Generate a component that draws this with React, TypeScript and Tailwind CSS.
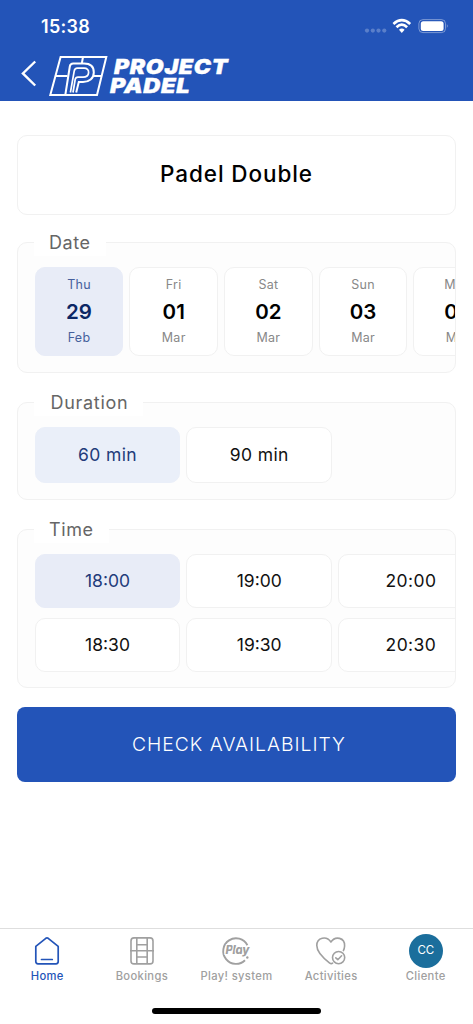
import React, { useState } from 'react';
import clsx from 'clsx';

const days = [
  { name: 'Thu', day: '29', month: 'Feb' },
  { name: 'Fri', day: '01', month: 'Mar' },
  { name: 'Sat', day: '02', month: 'Mar' },
  { name: 'Sun', day: '03', month: 'Mar' },
  { name: 'Mon', day: '04', month: 'Mar' },
];

const durations = ['60 min', '90 min'];

const times = ['18:00', '18:30', '19:00', '19:30', '20:00', '20:30'];

function StatusIcons() {
  return (
    <svg width="86" height="20" viewBox="0 0 86 20" fill="none">
      <g fill="#fff" fillOpacity="0.25">
        <circle cx="4" cy="14.6" r="2.1" />
        <circle cx="9.8" cy="14.6" r="2.1" />
        <circle cx="15.5" cy="14.6" r="2.1" />
        <circle cx="21.3" cy="14.6" r="2.1" />
      </g>
      <g stroke="#fff" strokeWidth="2.7">
        <path d="M30.4 7.9 Q38.8 0.5 47.2 7.9" />
        <path d="M33.5 11.2 Q38.8 6.2 44.1 11.2" />
      </g>
      <path d="M36 13.7 Q38.8 11.3 41.6 13.7 L38.8 16.9 Z" fill="#fff" />
      <rect x="55.9" y="3.6" width="26.6" height="13" rx="4" stroke="#fff" strokeOpacity="0.4" />
      <rect x="57.8" y="5.3" width="22.8" height="9.6" rx="2.5" fill="#fff" />
      <path d="M83.9 8 Q85.6 10 83.9 12 Z" fill="#fff" fillOpacity="0.5" />
    </svg>
  );
}

function Logo() {
  return (
    <div className="flex">
      <svg width="60" height="44" viewBox="48 54 60 44" fill="none" stroke="#fff" strokeWidth="2">
        <path d="M60.6 56.9 H106.3 L97 94.9 H50.3 Z" />
        <path d="M55 76 H67.5 M93 76 H101.5 M83 57 L81.8 63.5" />
        <path d="M65.3 95 L69.8 66.5 Q70.3 63.6 73.2 63.6 H84 C90 63.6 93.8 66.5 93.8 72.5 C93.8 78.5 89 82 83 82 H78.8 L76.2 92.5" />
        <path d="M70.4 92.5 L74.2 71.2 Q74.7 68.2 77.4 68.2 H84 C87 68.2 88.8 70 88.6 72.6 C88.4 75.8 86 77.2 83 77.2 H78 Q75.6 77.2 75.2 79.4 L73 92.5" strokeWidth="1.7" />
      </svg>
      <div className="pt-[4px] pl-[2px] text-[20px] leading-[18.5px] font-black italic text-white [-webkit-text-stroke:0.4px_white]">
        <div className="origin-left scale-x-[1.15] pl-[3.5px] tracking-[0.6px]">PROJECT</div>
        <div className="origin-left scale-x-[1.18] tracking-[0.5px]">PADEL</div>
      </div>
    </div>
  );
}

function Section({ title, className, children }: { title: string; className: string; children: React.ReactNode }) {
  return (
    <section className={clsx('relative rounded-[10px] border border-[#f1f1f1] bg-[#fdfdfd]', className)}>
      <h2 className="absolute -top-[13px] left-[16px] bg-white px-[15px] text-[18px] leading-[26px] tracking-[0.6px] text-[#666]">
        {title}
      </h2>
      <div className="overflow-hidden pt-[24px] pl-[16.7px]">{children}</div>
    </section>
  );
}

const HomeIcon = () => (
  <svg width="28" height="30" viewBox="0 0 28 30" fill="none" stroke="#2354b8" strokeWidth="1.7" strokeLinejoin="round" strokeLinecap="round">
    <path d="M2.8 10.4 L12.8 2.3 Q14 1.4 15.2 2.3 L25.2 10.4 V25.5 Q25.2 27.8 23 27.8 H5 Q2.8 27.8 2.8 25.5 Z" />
    <path d="M8.5 23.5 H19.3" />
  </svg>
);

const CourtIcon = () => (
  <svg width="28" height="30" viewBox="0 0 28 30" fill="none" stroke="#a0a0a0" strokeWidth="1.6">
    <rect x="3" y="1.9" width="22" height="26" rx="3" />
    <path d="M8.8 2 V28 M19.2 2 V28 M2 14.8 H26 M8.8 8.7 H19.2 M8.8 21 H19.2" />
  </svg>
);

const PlayIcon = () => (
  <svg width="30" height="30" viewBox="0 0 30 30" fill="none" stroke="#a0a0a0" strokeWidth="1.9">
    <path d="M26.4 9.2 A12.8 12.8 0 1 0 24 24.2" />
    <circle cx="26.3" cy="21.5" r="1.2" fill="#a0a0a0" stroke="none" />
    <text x="4.4" y="18" fill="#a0a0a0" stroke="#fff" strokeWidth="2" paintOrder="stroke" fontSize="11.5" fontWeight="800" fontStyle="italic" textLength="24">Play</text>
  </svg>
);

const HeartIcon = () => (
  <svg width="32" height="30" viewBox="0 0 32 30" fill="none" stroke="#a0a0a0" strokeWidth="1.6" strokeLinecap="round" strokeLinejoin="round">
    <path d="M17.6 27.2 Q16.2 28.2 14.4 26.8 C9 22.7 1.8 17 1.8 9.6 C1.8 1.5 11.5 -0.5 15.9 6 C20.3 -0.5 30 1.5 29.6 10 Q29.5 12.5 28.4 14.6" />
    <circle cx="23.6" cy="21.6" r="6.1" />
    <path d="M20.8 21.8 L22.8 23.7 L26.6 19.8" />
  </svg>
);

const Avatar = () => (
  <div className="flex h-[34px] w-[34px] items-center justify-center rounded-full bg-[#1b6e9c] text-[11.5px] tracking-[-0.2px] text-white">
    CC
  </div>
);

const tabs = [
  { label: 'Home', icon: <HomeIcon /> },
  { label: 'Bookings', icon: <CourtIcon /> },
  { label: 'Play! system', icon: <PlayIcon /> },
  { label: 'Activities', icon: <HeartIcon /> },
  { label: 'Cliente', icon: <Avatar /> },
];

export default function App() {
  const [day, setDay] = useState('29');
  const [duration, setDuration] = useState('60 min');
  const [time, setTime] = useState('18:00');

  return (
    <div className="flex h-[1024px] w-[473px] flex-col overflow-hidden bg-white font-['Inter',sans-serif]">
      <header className="h-[101px] shrink-0 bg-[#2354b8]">
        <div className="flex h-[54px] items-start justify-between pr-[24px] pl-[41px]">
          <span className="pt-[15px] text-[18px] leading-[24px] font-semibold tracking-[0.3px] text-white">15:38</span>
          <div className="pt-[16px]"><StatusIcons /></div>
        </div>
        <div className="flex pl-[20px]">
          <svg className="mt-[5px] mr-[10px]" width="18" height="28" viewBox="0 0 18 28" fill="none" stroke="#fff" strokeWidth="2.4">
            <path d="M15.2 2.5 L2.9 14.4 L15.2 26.5" />
          </svg>
          <Logo />
        </div>
      </header>

      <main className="flex-1 pr-[17px] pl-[17px]">
        <div className="mt-[34px] flex h-[80px] items-center justify-center rounded-[10px] border border-[#f1f1f1] pb-[2px] text-[22.5px] font-medium tracking-[0.9px] text-black">
          Padel Double
        </div>

        <Section title="Date" className="mt-[27px] h-[131px]">
          <div className="flex gap-[6px]">
            {days.map((d) => (
              <button
                key={d.day}
                onClick={() => setDay(d.day)}
                className={clsx(
                  'flex h-[89px] w-[88.7px] shrink-0 flex-col items-center rounded-[10px] border pt-[8px]',
                  day === d.day ? 'border-[#e8ecf7] bg-[#e8ecf7] text-[#46609c]' : 'border-[#f1f1f1] bg-white text-[#888]'
                )}
              >
                <span className="text-[12.5px] leading-[18px] tracking-[0.3px]">{d.name}</span>
                <span className={clsx('text-[20.5px] leading-[35px] font-semibold', day === d.day ? 'text-[#0c2765]' : 'text-black')}>
                  {d.day}
                </span>
                <span className="text-[12.5px] leading-[18px] tracking-[0.3px]">{d.month}</span>
              </button>
            ))}
          </div>
        </Section>

        <Section title="Duration" className="mt-[29px] h-[98px] [&>h2]:pl-[16.5px] [&>h2]:tracking-[0.7px]">
          <div className="flex gap-[6px]">
            {durations.map((d) => (
              <button
                key={d}
                onClick={() => setDuration(d)}
                className={clsx(
                  'h-[56px] w-[145.7px] rounded-[10px] border text-[17.5px] tracking-[0.4px]',
                  duration === d ? 'border-[#eaeff9] bg-[#eaeff9] text-[#223b7a]' : 'border-[#f1f1f1] bg-white text-[#111]'
                )}
              >
                {d}
              </button>
            ))}
          </div>
        </Section>

        <Section title="Time" className="mt-[29px] h-[159px]">
          <div className="grid grid-flow-col grid-rows-[54px_54px] gap-x-[6px] gap-y-[10px]">
            {times.map((t) => (
              <button
                key={t}
                onClick={() => setTime(t)}
                className={clsx(
                  'w-[145.7px] rounded-[10px] border text-[17.5px]',
                  t.startsWith('20') && 'tracking-[0.4px]',
                  time === t ? 'border-[#e8ecf7] bg-[#e8ecf7] text-[#223b7a]' : 'border-[#f1f1f1] bg-white text-[#111]'
                )}
              >
                {t}
              </button>
            ))}
          </div>
        </Section>

        <button className="mt-[19px] h-[75px] w-full rounded-[8px] bg-[#2354b8] pl-[5px] text-[19.3px] font-light tracking-[1px] text-white">
          CHECK AVAILABILITY
        </button>
      </main>

      <nav className="h-[96px] shrink-0 border-t border-[#dedede]">
        <div className="grid grid-cols-5">
          {tabs.map((tab, i) => (
            <div key={tab.label} className="flex flex-col items-center">
              <div className="flex h-[39px] items-center pt-[4px]">{tab.icon}</div>
              <span className={clsx('text-[11.2px] leading-[17px] font-medium tracking-[0.35px]', i === 0 ? 'text-[#2354b8]' : 'text-[#a0a0a0]')}>
                {tab.label}
              </span>
            </div>
          ))}
        </div>
        <div className="mx-auto mt-[23px] h-[6px] w-[169px] rounded-full bg-black" />
      </nav>
    </div>
  );
}
